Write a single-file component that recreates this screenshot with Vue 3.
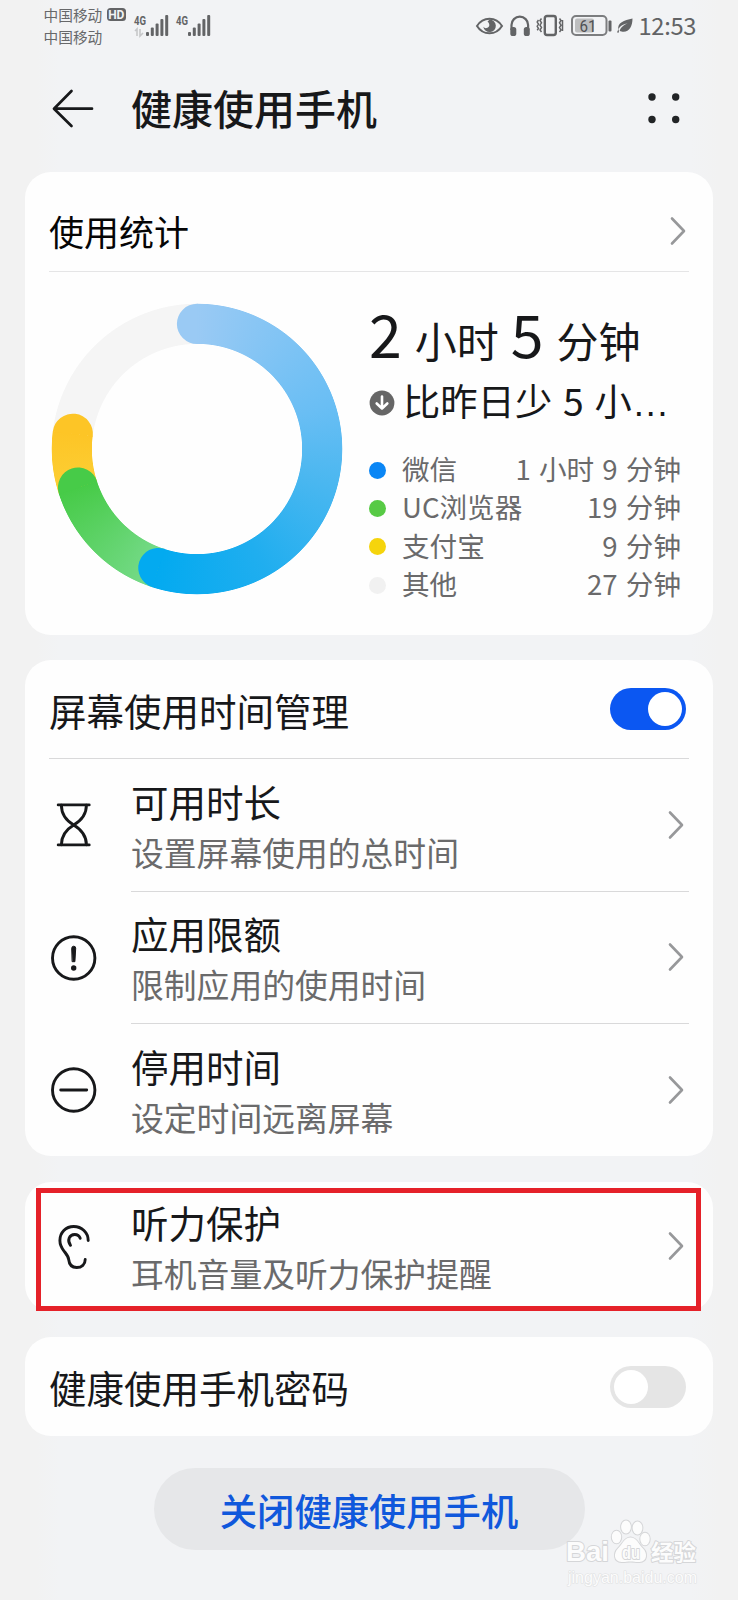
<script setup>
import { ref } from 'vue'

const limitsOn = ref(true)
const passwordOn = ref(false)

const usage = [
  { name: '微信', time: '1 小时 9 分钟', tone: 'blue' },
  { name: 'UC浏览器', time: '19 分钟', tone: 'green' },
  { name: '支付宝', time: '9 分钟', tone: 'yellow' },
  { name: '其他', time: '27 分钟', tone: 'gray' },
]

// Rounded ends of the donut segments, in degrees clockwise from the top
const caps = [
  { angle: 277, color: '#fdc526' },
  { angle: 252, color: '#47cb48' },
  { angle: 198, color: '#03aaf0' },
]

const rows = [
  { icon: 'hourglass', title: '可用时长', sub: '设置屏幕使用的总时间' },
  { icon: 'alert', title: '应用限额', sub: '限制应用的使用时间' },
  { icon: 'minus', title: '停用时间', sub: '设定时间远离屏幕' },
]
</script>

<template>
  <div class="screen">
    <header class="status">
      <div class="carriers">
        <div class="carrier">中国移动<span class="hd">HD</span></div>
        <div class="carrier">中国移动</div>
      </div>
      <svg class="signals" width="80" height="26" viewBox="0 0 80 26">
        <g fill="#636466">
          <text class="net" x="0" y="10.500" textLength="12" lengthAdjust="spacingAndGlyphs">4G</text>
          <text class="net" x="42" y="10.500" textLength="12" lengthAdjust="spacingAndGlyphs">4G</text>
          <g v-for="x in [12, 54]" :key="x">
            <rect :x="x" y="18" width="3" height="4" rx="1" />
            <rect :x="x + 4.800" y="13.500" width="3" height="8.500" rx="1" />
            <rect :x="x + 9.600" y="9.500" width="3" height="12.500" rx="1" />
            <rect :x="x + 14.400" y="5" width="3" height="17" rx="1" />
            <rect :x="x + 19.200" y="1" width="3" height="21" rx="1" />
          </g>
        </g>
        <path d="M1 17l2-2v7M6 15v7l3-3" fill="none" stroke="#c6c7c9" stroke-width="1.600" />
      </svg>
      <div class="sys">
        <svg width="158" height="24" viewBox="0 0 158 24">
          <g fill="none" stroke="#636466" stroke-width="2">
            <path d="M2 12C8 2.300 21 2.300 27 12C21 21.700 8 21.700 2 12Z" />
            <path d="M36.500 16V11a8.300 8.300 0 0 1 16.600 0V16" stroke-width="2.200" />
            <rect x="69.800" y="2" width="11" height="19" rx="2.200" stroke-width="2.400" />
            <path d="M66.500 4.500l-1.500 2 1.500 2.300-1.500 2.400 1.500 2.400-1.500 2.400 1.500 2M63.500 6l-1.300 2 1.300 2-1.300 2.300 1.300 2.200-1.300 1.800M84.500 4.500l1.500 2-1.500 2.300 1.500 2.400-1.500 2.400 1.500 2.400-1.500 2M87.500 6v11" stroke-width="1.500" />
            <rect x="97" y="2" width="34.500" height="19" rx="4" stroke="#7c7d7f" />
          </g>
          <g fill="#636466">
            <path d="M14.500 5.500a6.300 6.300 0 1 1-6.200 7.200a3.300 3.300 0 0 0 5.800-3a3.200 3.200 0 0 0-1.600-2z" />
            <rect x="35.300" y="13" width="6" height="9" rx="2.600" />
            <rect x="48.800" y="13" width="6" height="9" rx="2.600" />
            <rect x="133.500" y="6.500" width="3" height="11" rx="1" />
            <path d="M157.500 4.500c0 8-3.500 14-10 13.200l-2.800-.6c.4-3 3.600-6.200 8-7.600c-5 .7-8.800 3.400-9.300 6.400C142 8.500 149 6.500 157.500 4.500Z" />
            <path d="M143.500 15l-1.500 3.500h2z" />
          </g>
          <rect x="100" y="4.500" width="19" height="14" rx="2" fill="#bdbebf" />
          <text class="pct" x="104.500" y="17.500" textLength="17" lengthAdjust="spacingAndGlyphs">61</text>
        </svg>
        <span class="clock">12:53</span>
      </div>
    </header>

    <div class="appbar">
      <svg class="back" width="42" height="40" viewBox="0 0 42 40" fill="none" stroke="#17181a" stroke-width="2.700" stroke-linecap="round" stroke-linejoin="round">
        <path d="M19.500 2L2 19.700L19.500 37M2.500 19.700H40" />
      </svg>
      <h1>健康使用手机</h1>
      <svg class="more" width="34" height="32" viewBox="0 0 34 32" fill="#222426">
        <circle cx="5" cy="5" r="3.700" /><circle cx="28.700" cy="5" r="3.700" />
        <circle cx="5" cy="27.500" r="3.700" /><circle cx="28.700" cy="27.500" r="3.700" />
      </svg>
    </div>

    <section class="card stats">
      <div class="stats-head">
        <h2>使用统计</h2>
        <svg class="chev" width="16" height="28" viewBox="0 0 16 28"><path d="M2 1.500L14 14L2 26.500" /></svg>
      </div>
      <div class="stats-body">
        <div class="donut">
          <div class="ring"></div>
          <svg class="caps" width="292" height="292" viewBox="0 0 292 292">
            <path v-for="c in caps" :key="c.angle" d="M145.600 .8h.4a20.100 20.100 0 0 1 0 40.200h-.4z" :fill="c.color" :transform="`rotate(${c.angle} 146 146)`" />
            <path d="M146.400 .8h-.4a20.100 20.100 0 0 0 0 40.200h.4z" fill="#9acaf4" />
          </svg>
        </div>
        <div class="figures">
          <div class="total"><b>2</b><span>小时</span><b>5</b><span>分钟</span></div>
          <div class="delta">
            <svg width="26" height="26" viewBox="0 0 26 26">
              <circle cx="13" cy="13" r="12.400" fill="#666" />
              <path d="M13 6.500V18M7.700 13.500L13 18.500L18.300 13.500" fill="none" stroke="#fff" stroke-width="2.600" stroke-linecap="round" stroke-linejoin="round" />
            </svg>
            <span>比昨日少 5 小<i>…</i></span>
          </div>
          <ul>
            <li v-for="u in usage" :key="u.name">
              <span class="dot" :class="u.tone"></span>
              <span>{{ u.name }}</span>
              <span class="time">{{ u.time }}</span>
            </li>
          </ul>
        </div>
      </div>
    </section>

    <section class="card manage">
      <div class="switch-row">
        <h3>屏幕使用时间管理</h3>
        <button class="toggle" :class="{ on: limitsOn }" @click="limitsOn = !limitsOn"><span></span></button>
      </div>
      <div v-for="r in rows" :key="r.icon" class="row">
        <svg class="icon" width="49" height="48" viewBox="-.7 .3 49 48" fill="none" stroke="#17181a" stroke-width="2.900" stroke-linecap="round">
          <g v-if="r.icon === 'hourglass'">
            <path d="M8.500 4.200H39.500M8.500 44.200H39.500" />
            <path d="M11.700 4.500C11.700 14 16 19.500 24 24.200C32 29 36.700 34.500 36.700 44M36.700 4.500C36.700 14 32 19.500 24 24.200C16 29 11.700 34.500 11.700 44" />
          </g>
          <g v-else-if="r.icon === 'alert'">
            <circle cx="24" cy="24.300" r="21.200" />
            <path d="M22 14.500a2 2 0 0 1 4 0L25.200 28h-2.400z" fill="#17181a" stroke-width="1" stroke-linejoin="round" />
            <circle cx="24" cy="34.300" r="2.700" fill="#17181a" stroke="none" />
          </g>
          <g v-else>
            <circle cx="24" cy="24.300" r="21.200" />
            <path d="M11 24.300H37" />
          </g>
        </svg>
        <div class="row-main">
          <div class="copy"><h3>{{ r.title }}</h3><p>{{ r.sub }}</p></div>
          <svg class="chev" width="16" height="28" viewBox="0 0 16 28"><path d="M2 1.500L14 14L2 26.500" /></svg>
        </div>
      </div>
    </section>

    <section class="card hearing">
      <div class="row">
        <svg class="icon" width="49" height="48" viewBox="-.7 0 49 48" fill="none" stroke="#17181a" stroke-width="2.900" stroke-linecap="round">
          <path d="M38.500 17.500C38.500 9.500 32 3.500 24 3.500C16 3.500 10.200 9.500 10.200 17.500C10.200 22 11.800 25 14.500 28.300C17.700 32.500 18.700 33.500 19 36.500C19.500 41.500 22.500 44.500 27 44.500C32 44.500 35.500 41.500 35.500 36.500" />
          <path d="M20.800 22.300C17.200 17.500 19.500 11.500 25 11.500C28.200 11.500 29.700 13 30.500 15.300" />
        </svg>
        <div class="row-main">
          <div class="copy"><h3>听力保护</h3><p>耳机音量及听力保护提醒</p></div>
          <svg class="chev" width="16" height="28" viewBox="0 0 16 28"><path d="M2 1.500L14 14L2 26.500" /></svg>
        </div>
      </div>
      <div class="highlight"></div>
    </section>

    <section class="card password">
      <h3>健康使用手机密码</h3>
      <button class="toggle" :class="{ on: passwordOn }" @click="passwordOn = !passwordOn"><span></span></button>
    </section>

    <button class="close">关闭健康使用手机</button>

    <svg class="watermark" width="146" height="76" viewBox="0 0 146 76">
      <g fill="#fcfcfc" stroke="#d5d6d8" stroke-width="2" paint-order="stroke" stroke-linejoin="round">
        <text x="5" y="44" font-size="28" font-weight="700" textLength="43" lengthAdjust="spacingAndGlyphs">Bai</text>
        <ellipse cx="55.500" cy="20" rx="4.700" ry="6.300" />
        <ellipse cx="65" cy="10" rx="4.900" ry="6.500" />
        <ellipse cx="76.500" cy="11" rx="4.900" ry="6.500" />
        <ellipse cx="84" cy="22" rx="4.700" ry="6.300" />
        <path d="M69.500 20.500C75.500 20.500 77.500 27 82 31.500C86.500 36 86.500 44.500 78.500 45C74.500 45.300 73.500 44.500 69.500 44.500C65.500 44.500 64.500 45.300 60.500 45C52.500 44.500 52.500 36 57 31.500C61.500 27 63.500 20.500 69.500 20.500Z" />
        <text x="61" y="42" font-size="18" font-weight="700" textLength="18" lengthAdjust="spacingAndGlyphs">du</text>
        <text class="hanzi" x="90" y="43" font-size="22" font-weight="700" textLength="45" lengthAdjust="spacingAndGlyphs">经验</text>
        <text x="7" y="66" font-size="16.500" stroke-width="1.200" stroke="#e0e1e2" textLength="129" lengthAdjust="spacingAndGlyphs">jingyan.baidu.com</text>
      </g>
    </svg>
  </div>
</template>

<style>
html, body { margin: 0; background: #f2f3f5; }
</style>

<style scoped>
* { box-sizing: border-box; }
.screen {
  position: relative;
  width: 738px;
  height: 1600px;
  overflow: hidden;
  padding: 0 25px;
  display: flex;
  flex-direction: column;
  background: linear-gradient(90deg, #f2f2f2 0, #f2f2f2 36px, #f2f3f5 60px, #f2f3f5 690px, #f2f2f2 720px);
  color: #17181a;
  font-family: "Noto Sans CJK SC", "Noto Sans", sans-serif;
}
h1, h2, h3, p, ul { margin: 0; padding: 0; font-weight: 400; list-style: none; white-space: nowrap; }
svg { display: block; flex: none; overflow: visible; }
button { border: 0; padding: 0; font: inherit; }

.status { height: 52px; flex: none; display: flex; align-items: flex-start; padding-left: 18.500px; color: #67686a; }
.carriers { width: 90px; padding-top: 3.500px; }
.carrier { display: flex; align-items: center; height: 22.200px; font-size: 14.700px; line-height: 22px; white-space: nowrap; }
.hd { margin-left: 4.500px; width: 19px; height: 13.500px; border-radius: 3.500px; background: #636466; color: #f2f3f5; font: 700 12px/14px "Roboto", sans-serif; text-align: center; }
.signals { margin-top: 14px; }
.net { font: 700 13px "Roboto", sans-serif; }
.sys { display: flex; margin-left: auto; margin-right: 18.500px; padding-top: 14px; }
.pct { font: 400 16px "Roboto", sans-serif; fill: #505153; }
.clock { margin-left: 5.500px; width: 56px; font-size: 23.700px; line-height: 23px; letter-spacing: -.3px; white-space: nowrap; color: #626365; }

.appbar { height: 120px; flex: none; display: flex; padding: 36px 32px 0 27px; }
.back { margin-top: 1px; }
h1 { margin-left: 37px; font-size: 41px; line-height: 38px; font-weight: 500; }
.more { margin-left: auto; margin-top: 4px; }

.card { flex: none; background: #fefefe; border-radius: 26px; margin-bottom: 26px; }
.chev { fill: none; stroke: #97989a; stroke-width: 2.600; stroke-linecap: round; stroke-linejoin: round; }
.stats { height: 463px; padding: 0 24px; margin-bottom: 25px; }
.stats-head { height: 100px; display: flex; justify-content: space-between; align-items: center; padding: 18px 3px 0 0; border-bottom: 1px solid #e5e5e6; }
h2 { font-size: 35px; line-height: 40px; color: #050505; }
.stats-body { display: flex; padding-top: 31px; }
.donut { position: relative; width: 292px; height: 292px; margin-left: 2px; flex: none; }
.ring {
  width: 292px;
  height: 292px;
  border-radius: 50%;
  background: conic-gradient(#9acaf4 0deg, #69bef4 72deg, #4ab7f0 105deg, #20aeef 150deg, #03aaf0 198deg, #78db8c 198deg, #47cb48 252deg, #fccf35 252deg, #fdc526 277deg, #f5f5f5 277deg 360deg);
  -webkit-mask: radial-gradient(circle, transparent 104.700px, #000 105.500px, #000 144.900px, transparent 145.700px);
  mask: radial-gradient(circle, transparent 104.700px, #000 105.500px, #000 144.900px, transparent 145.700px);
}
.caps { position: absolute; left: 0; top: 0; }
.figures { flex: 1; margin-left: 26px; }
.total { display: flex; align-items: baseline; height: 70px; line-height: 60px; white-space: nowrap; }
.total b { font-size: 59px; font-weight: 400; }
.total span { font-size: 42px; margin: 0 12px 0 13px; }
.delta { display: flex; align-items: center; height: 44px; margin-top: 6px; font-size: 37.300px; line-height: 44px; white-space: nowrap; }
.delta span { margin-left: 8px; word-spacing: 2.500px; }
.delta svg { position: relative; top: 2px; }
.delta i { font-style: normal; font-family: "Liberation Sans", sans-serif; }
ul { margin-top: 26px; }
li { display: flex; align-items: center; height: 38.300px; font-size: 27.600px; line-height: 38px; color: #6a6a6b; word-spacing: 2px; }
.dot { width: 17px; height: 17px; border-radius: 50%; margin: 4px 16px 0 0; }
.blue { background: #0a86f5; }
.green { background: #57ca45; }
.yellow { background: #f5d40c; }
.gray { background: #f1f1f1; }
.time { margin-left: auto; padding-right: 8px; }

h3 { font-size: 37.500px; line-height: 44px; }
.manage { height: 496px; padding: 0 24px; }
.switch-row { height: 99px; display: flex; justify-content: space-between; align-items: center; padding-right: 3px; border-bottom: 1px solid #d9d9da; }
.switch-row h3 { padding-top: 1px; }
.toggle { width: 76px; height: 42px; border-radius: 21px; padding: 4px; background: #e5e5e5; display: flex; flex: none; }
.toggle span { width: 34px; height: 34px; border-radius: 50%; background: #fff; }
.toggle.on { background: #0b57f2; justify-content: flex-end; }
.row { display: flex; height: 132.500px; align-items: center; }
.row-main { flex: 1; margin-left: 33px; height: 100%; display: flex; justify-content: space-between; align-items: center; padding-right: 5px; border-bottom: 1px solid #d9d9da; }
.row:last-child .row-main, .hearing .row-main { border-bottom-color: transparent; }
.copy { padding-top: 4px; }
.copy h3 { line-height: 50px; }
p { font-size: 32.800px; line-height: 52px; color: #6a6a6b; }
.hearing { position: relative; height: 129px; padding: 0 24px; }
.hearing .row { height: 129px; }
.highlight { position: absolute; left: 11px; top: 6px; width: 665px; height: 123px; border: 5px solid #e52129; }
.password { height: 99px; display: flex; justify-content: space-between; align-items: center; padding: 0 27px 0 24px; }
.close { align-self: center; width: 431px; height: 82px; margin-top: 6px; padding-top: 2px; border-radius: 41px; background: #e6e7e9; color: #1058dc; font-size: 37.300px; font-weight: 500; flex: none; }
.watermark { position: absolute; left: 561px; top: 1517px; font-family: "Liberation Sans", sans-serif; }
.hanzi { font-family: "Noto Sans CJK SC", sans-serif; }
</style>
